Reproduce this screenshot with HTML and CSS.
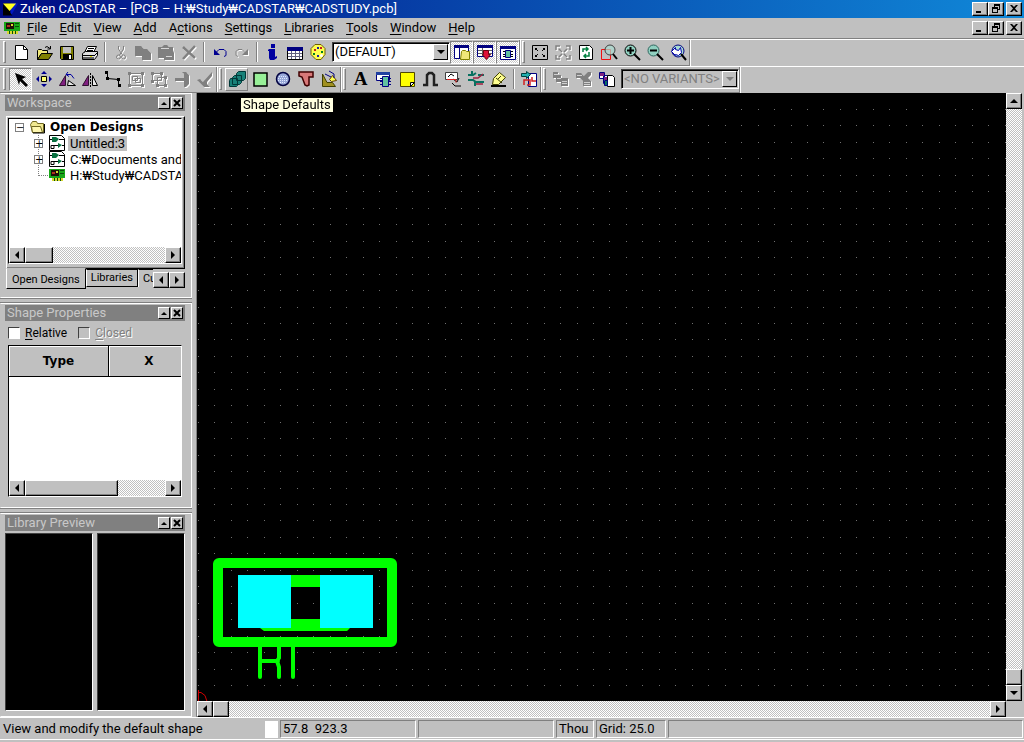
FILE: index.html
```
<!DOCTYPE html>
<html lang="en">
<head>
<meta charset="utf-8">
<title>Zuken CADSTAR</title>
<link rel="stylesheet" href="styles.css">
</head>
<body>
<div class="app">
  <header class="titlebar">
    <svg class="logo" viewBox="0 0 16 16"><path fill="#000" d="M0 2h8v12z"/><path fill="#0018c8" d="M16 2H8v14z"/><path fill="#000" d="M0 3v12h10z"/><path fill="#ffff20" d="M0 2h14L7 10z"/></svg>
    <h1 class="title">Zuken CADSTAR – [PCB – H:₩Study₩CADSTAR₩CADSTUDY.pcb]</h1>
    <div class="winbtns">
      <button class="winbtn" aria-label="Minimize"><svg viewBox="0 0 10 10"><path d="M1 7h5v2H1z"/></svg></button>
      <button class="winbtn" aria-label="Restore"><svg viewBox="0 0 10 10"><path d="M3 0h6v6H7V5h1V2H4v1H3zM1 3h6v6H1zM2 5v3h4V5z" fill-rule="evenodd"/></svg></button>
      <button class="winbtn apart" aria-label="Close"><svg viewBox="0 0 10 10"><path d="M1 1h2l2 2 2-2h2L6 4.500l3 3.500H7L5 6 3 8H1l3-3.500z"/></svg></button>
    </div>
  </header>

  <nav class="menubar">
    <svg class="board" viewBox="0 0 16 12"><path fill="#18a818" d="M0 0h16v9H0z"/><path fill="#201008" d="M2 1h8v6H2z"/><path fill="#b03020" d="M3 3h3v2H3z"/><path fill="#d8d830" d="M3 9h11v3H3zM7 2h2v2H7z"/><path fill="#085008" d="M11 1h4v1h-4zM11 4h4v1h-4zM5 9h1v3H5zM8 9h1v3H8zM11 9h1v3h-1z"/></svg>
    <a href="#"><u>F</u>ile</a><a href="#"><u>E</u>dit</a><a href="#"><u>V</u>iew</a><a href="#"><u>A</u>dd</a><a href="#">A<u>c</u>tions</a><a href="#"><u>S</u>ettings</a><a href="#"><u>L</u>ibraries</a><a href="#"><u>T</u>ools</a><a href="#"><u>W</u>indow</a><a href="#"><u>H</u>elp</a>
    <div class="winbtns">
      <button class="winbtn" aria-label="Minimize document"><svg viewBox="0 0 10 10"><path d="M1 7h5v2H1z"/></svg></button>
      <button class="winbtn" aria-label="Restore document"><svg viewBox="0 0 10 10"><path d="M3 0h6v6H7V5h1V2H4v1H3zM1 3h6v6H1zM2 5v3h4V5z" fill-rule="evenodd"/></svg></button>
      <button class="winbtn apart" aria-label="Close document"><svg viewBox="0 0 10 10"><path d="M1 1h2l2 2 2-2h2L6 4.500l3 3.500H7L5 6 3 8H1l3-3.500z"/></svg></button>
    </div>
  </nav>

  <div class="toolrow">
    <div class="toolbar">
      <i class="grip"></i>
      <button class="tool" aria-label="New"><svg viewBox="0 0 18 18"><path fill="#fff" stroke="#000" d="M3.500 2.500h8l4 4v10h-12z"/><path fill="none" stroke="#000" d="M11.500 2.500v4h4"/></svg></button>
      <button class="tool" aria-label="Open"><svg viewBox="0 0 18 18"><path fill="#f0e878" stroke="#000" d="M2.500 16.500v-9l1-1h3l1 1h5v3h-6z"/><path fill="#808000" stroke="#000" d="M2.500 16.500l4-6h11l-4 6z"/><path fill="none" stroke="#000" d="M10 4.500l2-1 3 2M15.500 3v3h-3"/></svg></button>
      <button class="tool" aria-label="Save"><svg viewBox="0 0 18 18"><path fill="#808000" stroke="#000" d="M2.500 3.500h13v13h-12l-1-1z"/><path fill="#c0c0c0" d="M5 4h8v6H5z"/><path d="M5 11h9v5H5z"/><path fill="#fff" d="M11 12h2v4h-2z"/></svg></button>
      <button class="tool" aria-label="Print"><svg viewBox="0 0 18 18"><path fill="#fff" stroke="#000" d="M6.500 3.500h9l-3 6h-9z"/><path fill="#e0e0e0" stroke="#000" d="M1.500 10.500l3-2h12v4l-3 4h-12z"/><path stroke="#000" d="M2 12.500h12M14 12l2-2M7 5.500h6M6 7.500h6"/><path fill="#606060" d="M2 14h11v2H2z"/><path fill="#e0e000" d="M9 13h2v1H9z"/></svg></button>
      <i class="sep"></i>
      <button class="tool" disabled aria-label="Cut"><svg viewBox="0 0 18 18"><g fill="none" stroke="#808080"><path d="M7.500 3v3l4 6M12.500 3v3l-4 6"/><circle cx="7.500" cy="14" r="2"/><circle cx="12.500" cy="14" r="2"/></g></svg></button>
      <button class="tool" disabled aria-label="Copy"><svg viewBox="0 0 18 18"><path fill="#808080" d="M1 3h6l3 3h3l4 4v7H8v-4H1z"/></svg></button>
      <button class="tool" disabled aria-label="Paste"><svg viewBox="0 0 18 18"><path fill="#808080" d="M1 4h4l2-2h3l2 2h4v3l1 3v7H7v-2H1z"/><path fill="#d8d8d8" d="M4 5h8v1H4zM9 13h6v1H9z"/></svg></button>
      <button class="tool" disabled aria-label="Delete"><svg viewBox="0 0 18 18"><path fill="none" stroke="#808080" stroke-width="2.500" d="M3 4l12 11M15 3L3 16"/></svg></button>
      <i class="sep"></i>
      <button class="tool" aria-label="Undo"><svg viewBox="0 0 18 18"><path fill="none" stroke="#000090" d="M5 10.500l4-4h5l2 2v4l-2 1"/><path fill="#000090" d="M4 6v6h6z"/></svg></button>
      <button class="tool" disabled aria-label="Redo"><svg viewBox="0 0 18 18"><path fill="none" stroke="#808080" d="M13 10.500l-4-4H5l-2 2v4l2 1"/><path fill="#808080" d="M15 6v6H9z"/></svg></button>
      <i class="sep"></i>
      <button class="tool" aria-label="Information"><svg viewBox="0 0 18 18"><path fill="#0000a0" d="M8 1h4v4H8zM6 6h6v8l2-1v2l-3 2H7l-1-2V8H5V7z"/></svg></button>
      <button class="tool" aria-label="Report"><svg viewBox="0 0 18 18"><path fill="#fff" stroke="#000" d="M1.500 4.500h15v12h-15z"/><path fill="#000080" d="M1 4h16v4H1z"/><path stroke="#606080" d="M2 10.500h14M2 13.500h14M5.500 8v8M9.500 8v8M13.500 8v8"/></svg></button>
      <button class="tool" aria-label="Colours"><svg viewBox="0 0 18 18"><path fill="#ffff50" stroke="#706000" d="M6 1.500h6l4 4v6l-4 5H7l-5-5v-6z"/><path fill="#c02020" d="M5 6h2v2H5zM11 4h2v2h-2z"/><path fill="#008020" d="M4 10h2v2H4zM12 8h2v2h-2z"/><path fill="#2020a0" d="M8 4h2v2H8zM8 12h2v2H8z"/><circle cx="12.500" cy="12.500" r="1.500" fill="#fff"/></svg></button>
      <span class="combo"><select aria-label="Colour file"><option>(DEFAULT)</option></select><i class="drop"></i></span>
      <button class="tool pressed" aria-label="Workspace window"><svg viewBox="0 0 18 18"><path fill="#fff" stroke="#000080" d="M1.500 2.500h14v13h-14z"/><path fill="#000080" d="M1 2h15v3H1zM6 5h1v11H6z"/><path fill="#f0e878" stroke="#808000" d="M8.500 8.500l1-1h3l1 1h3v8h-9z"/></svg></button>
      <button class="tool pressed" aria-label="Item properties"><svg viewBox="0 0 18 18"><path fill="#fff" stroke="#000080" d="M1.500 2.500h15v11h-15z"/><path fill="#000080" d="M1 2h16v3H1z"/><path stroke="#606060" d="M2 7.500h14M2 10.500h14M6.500 5v8"/><path fill="#e01038" stroke="#700010" d="M7.500 7.500h5v4h2l-4 5-4-5h1z"/></svg></button>
      <button class="tool pressed" aria-label="Library preview"><svg viewBox="0 0 18 18"><path fill="#fff" stroke="#000080" d="M1.500 3.500h15v13h-15z"/><path fill="#000080" d="M1 3h16v3H1z"/><path fill="#60c0a0" stroke="#000080" d="M6.500 7.500h5v7h-5z"/><path stroke="#000" d="M4 8.500h2M4 11.500h2M4 13.500h2M12 8.500h2M12 11.500h2M12 13.500h2"/></svg></button>
    </div>
    <div class="toolbar">
      <i class="grip"></i>
      <button class="tool" aria-label="View all"><svg viewBox="0 0 18 18"><path fill="none" stroke="#000" d="M1.500 2.500h15v14h-15zM4.500 7V5.500H6M4 5l3 3M13.500 7V5.500H12M14 5l-3 3M4.500 12v1.500H6M4 14l3-3M13.500 12v1.500H12M14 14l-3-3"/></svg></button>
      <button class="tool" disabled aria-label="View selected"><svg viewBox="0 0 18 18"><path fill="none" stroke="#808080" stroke-width="1.500" d="M2 7V3h4M16 7V3h-4M2 12v4h4M16 12v4h-4M5 6l3 3M13 6l-3 3M5 14l3-3M13 14l-3-3"/></svg></button>
      <button class="tool" aria-label="Redraw"><svg viewBox="0 0 18 18"><path fill="#fff" stroke="#000" d="M2.500 2.500h10l3 3v11h-13z"/><path fill="none" stroke="#008040" stroke-width="1.500" d="M6 9V6h5M9 4l2 2-2 2M12 9v4H7M9 11l-2 2 2 2"/></svg></button>
      <button class="tool" aria-label="Zoom area"><svg viewBox="0 0 18 18"><path fill="none" stroke="#f01010" d="M1.500 6.500h9v10h-9z"/><circle cx="10" cy="7" r="5" fill="#a8dcd0" fill-opacity=".7" stroke="#404040"/><path stroke="#000" stroke-width="2" d="M13 11l4 5"/></svg></button>
      <button class="tool" aria-label="Zoom in"><svg viewBox="0 0 18 18"><circle cx="7.500" cy="7.500" r="5.500" fill="#90d0c0" stroke="#000"/><path stroke="#000" stroke-width="2" d="M4 7.500h7M7.500 4v7M11 11l6 6"/></svg></button>
      <button class="tool" aria-label="Zoom out"><svg viewBox="0 0 18 18"><circle cx="7.500" cy="7.500" r="5.500" fill="#90d0c0" stroke="#306860"/><path stroke="#000" stroke-width="2" d="M4 7.500h7M11 11l6 6"/></svg></button>
      <button class="tool" aria-label="Previous view"><svg viewBox="0 0 18 18"><circle cx="9" cy="8" r="6" fill="#a8dcd0" stroke="#000080"/><path fill="#fff" stroke="#0000b0" d="M2.500 8.500l4-4v2l3 1 2-3 1 5-3 3-3-1v1z"/><path stroke="#000" stroke-width="2" d="M12 11l5 6"/></svg></button>
    </div>
  </div>

  <div class="toolrow">
    <div class="toolbar">
      <i class="grip"></i>
      <button class="tool pressed" aria-label="Select"><svg viewBox="0 0 18 18"><path d="M3 3l11 4-4 2 6 6-2 2-6-6-1 4z"/></svg></button>
      <button class="tool" aria-label="Move"><svg viewBox="0 0 18 18"><path fill="#ffff70" stroke="#000" d="M6.500 6.500h5v5h-5z"/><path fill="#000090" d="M9 1l3 3H6zM9 17l3-3H6zM1 9l3-3v6zM17 9l-3-3v6z"/></svg></button>
      <button class="tool" aria-label="Rotate"><svg viewBox="0 0 18 18"><path fill="#802080" stroke="#301030" d="M1.500 15.500l6-10v10z"/><path fill="#e8e8e8" stroke="#000" d="M9.500 15.500h8l-7-5z"/><path fill="none" stroke="#0000a0" d="M8 4.500h5l3 4M10 2L8 4.500l3 2"/></svg></button>
      <button class="tool" aria-label="Mirror"><svg viewBox="0 0 18 18"><path fill="#802080" stroke="#301030" d="M1.500 15.500l6-10v10z"/><path fill="#e8e8e8" stroke="#000" d="M16.500 15.500l-5-10v10z"/><path stroke="#000" stroke-dasharray="2 1" d="M9.500 3v14"/></svg></button>
      <button class="tool" aria-label="Edit segment"><svg viewBox="0 0 18 18"><path fill="none" stroke="#000" d="M2 2.500h1.500v6l11 1V15"/><path d="M1 1h3v3H1zM2 7h3v3H2zM13 8h3v3h-3zM14 14h3v3h-3z"/></svg></button>
      <button class="tool" disabled aria-label="Group"><svg viewBox="0 0 18 18"><path fill="none" stroke="#808080" d="M2.500 3.500h13v12h-13zM5.500 6.500h5v4h-5zM8.500 8.500h5v4h-5z"/><path fill="#808080" d="M1 2h3v3H1zM14 2h3v3h-3zM1 14h3v3H1zM14 14h3v3h-3z"/></svg></button>
      <button class="tool" disabled aria-label="Ungroup"><svg viewBox="0 0 18 18"><path fill="none" stroke="#808080" d="M2.500 3.500h9v7h-9zM7.500 7.500h8v8h-8z"/><path fill="#808080" d="M1 2h3v3H1zM10 2h3v3h-3zM1 10h3v3H1zM14 6h3v3h-3zM6 14h3v3H6zM14 14h3v3h-3z"/></svg></button>
      <button class="tool" disabled aria-label="Finish"><svg viewBox="0 0 18 18"><path fill="#808080" d="M2 8h9V4l-2-2h4l3 3v9l-3 3h-2v-6H2z"/></svg></button>
      <button class="tool" disabled aria-label="Verify"><svg viewBox="0 0 18 18"><path fill="#808080" d="M1 10l3-1 3 3L16 2v4l-5 6v2l3 3H8z"/></svg></button>
    </div>
    <div class="toolbar">
      <i class="grip"></i>
      <button class="tool raised" aria-label="Shape Defaults"><svg viewBox="0 0 18 18"><path fill="#188078" stroke="#003838" d="M8.500 3.500l2-2h7v7l-2 2h-7zM4.500 7.500l2-2h7v7l-2 2h-7zM1.500 10.500l1-2h7v7l-1 1h-7z"/></svg></button>
      <button class="tool" aria-label="Rectangle"><svg viewBox="0 0 18 18"><path fill="#98f098" stroke="#000" stroke-width="1.500" d="M3 3h13v13H3z"/></svg></button>
      <button class="tool" aria-label="Circle"><svg viewBox="0 0 18 18"><circle cx="9" cy="9" r="6.500" fill="#98a8d8" stroke="#000040" stroke-width="1.500"/><path stroke="#e0e8ff" stroke-dasharray="1 1" d="M5 6.500h8M4 8.500h10M4 10.500h10M6 12.500h6"/></svg></button>
      <button class="tool" aria-label="Polygon"><svg viewBox="0 0 18 18"><path fill="#d87878" stroke="#400000" stroke-width="1.500" d="M2 2h14v5h-4v8l-2 1-2-1L5 7 2 6z"/></svg></button>
      <button class="tool" aria-label="Edit shape"><svg viewBox="0 0 18 18"><path fill="#a09020" stroke="#404000" d="M2.500 4v12.500h13l-3-4H7z"/><path fill="#ffff50" stroke="#604000" d="M9.500 9.500l3-4 4 5-5 1z"/><path fill="none" stroke="#000080" d="M5 4l6 3M9 1l5 3v4"/></svg></button>
    </div>
    <div class="toolbar">
      <i class="grip"></i>
      <button class="tool" aria-label="Text"><b class="letter">A</b></button>
      <button class="tool" aria-label="Component"><svg viewBox="0 0 18 18"><path fill="#fff" stroke="#000080" d="M1.500 2.500h13v8h-13z"/><path fill="#2040a0" d="M1 2h14v3H1z"/><path fill="#60c0a0" stroke="#000080" d="M7.500 6.500h6v10h-6z"/><path stroke="#000080" d="M5 8.500h2M5 11.500h2M5 14.500h2M14 8.500h2M14 11.500h2M14 14.500h2"/></svg></button>
      <button class="tool" aria-label="Note"><svg viewBox="0 0 18 18"><path fill="#ffff00" stroke="#504800" d="M2.500 2.500h14v14h-14z"/><path fill="#fff" stroke="#000" d="M12.500 16.500v-4h4z"/></svg></button>
      <button class="tool" aria-label="Jumper"><svg viewBox="0 0 18 18"><path fill="none" stroke="#202020" stroke-width="2.500" d="M2 15h4V5l2-2h3l2 2v10h4"/></svg></button>
      <button class="tool" aria-label="Testpoint"><svg viewBox="0 0 18 18"><path fill="#fff" stroke="#404040" d="M1.500 2.500h12v7h-12z"/><path fill="none" stroke="#000" d="M4 7l3-3 3 2M9 9l4 3 2-4M8 13l3 3h6"/><path fill="none" stroke="#e02020" d="M3 9.500h9v3"/></svg></button>
      <button class="tool" aria-label="Route"><svg viewBox="0 0 18 18"><g fill="none" stroke="#087060" stroke-width="2"><path d="M1 5h5l3-2M1 10h5l3 2h8M5 1v5M8 16v-4M11 5h6"/></g><path fill="none" stroke="#a02040" stroke-width="1.500" d="M6 8h5l5-4M9 14h7"/></svg></button>
      <button class="tool" aria-label="Template"><svg viewBox="0 0 18 18"><path stroke="#000" stroke-width="2" d="M1 16h15"/><path fill="#ffff90" stroke="#404000" d="M2.500 14.500l1-6 6-6 6 5-7 7z"/><path fill="none" stroke="#404000" d="M6 8l6 5M8 9l3-3"/></svg></button>
      <i class="sep"></i>
      <button class="tool" aria-label="Design transfer"><svg viewBox="0 0 18 18"><path fill="#fff" stroke="#000080" d="M8.500 3.500h8v13h-8z"/><path fill="#20b0b0" stroke="#004040" d="M1.500 3.500h5v-2l4 3-4 4v-2h-5z"/><path fill="none" stroke="#d02020" stroke-width="1.500" d="M4 15v-5h6v5H7M12 7v4h4"/></svg></button>
    </div>
    <div class="toolbar">
      <i class="grip"></i>
      <button class="tool" disabled aria-label="Variant add"><svg viewBox="0 0 18 18"><path fill="#808080" d="M1 2h5v3h3v7H4V8H1zM9 8h7v8H9z"/><path stroke="#d0d0d0" d="M2 4.500h5M5 8.500h4M10 11.500h5M10 13.500h5"/></svg></button>
      <button class="tool" disabled aria-label="Variant check"><svg viewBox="0 0 18 18"><path fill="#808080" d="M1 3h5l3 3 4-4h3v3l-3 3 3 3v5H8v-5L5 8H1z"/><path stroke="#d0d0d0" d="M2 5.500h5M9 12.500h6M9 14.500h6"/></svg></button>
      <button class="tool" aria-label="Variant list"><svg viewBox="0 0 18 18"><path fill="#fff" stroke="#000080" d="M1.500 2.500h5v6h-5zM5.500 5.500h5v8h-5z"/><path fill="#802080" d="M2 3h4v3H2zM6 7h3v3H6z"/><path fill="#fff" stroke="#000" d="M9.500 5.500h5l2 2v9h-7z"/><path fill="#087060" stroke="#000080" d="M6.500 10.500h3v5h-3z"/></svg></button>
      <span class="combo"><select disabled aria-label="Variant"><option>&lt;NO VARIANTS&gt;</option></select><i class="drop"></i></span>
    </div>
  </div>

  <main class="main">
    <aside class="dock">
      <section class="pane workspace">
        <div class="caption"><h2>Workspace</h2><button class="capbtn" aria-label="Collapse workspace"><i class="arrow up"></i></button><button class="capbtn" aria-label="Close workspace"><svg viewBox="0 0 8 8"><path stroke="#000" stroke-width="2" d="M1 1l6 6M7 1L1 7"/></svg></button></div>
        <div class="tabpage">
          <div class="treebox">
            <ul class="tree">
              <li class="root"><button class="twist" aria-label="Collapse">−</button><svg class="nodeicon" viewBox="0 0 16 14"><path fill="#f0e890" stroke="#706820" d="M2.500 12.500L.500 4.500l2-3h4l1 2h6v9z"/><path fill="#fff8b0" stroke="#706820" d="M2.500 12.500l-1-6h9l2 6z"/><path fill="none" stroke="#000" d="M14.500 4v9H3"/></svg><b>Open Designs</b></li>
              <li class="child"><button class="twist" aria-label="Expand">+</button><svg class="nodeicon" viewBox="0 0 16 16"><path fill="#fff" stroke="#000" d="M.500.500h12l3 3v12H.500z"/><path fill="#087040" d="M3 2h4l3 2-3 3H3zM9 8l4 2-4 3z"/><path fill="none" stroke="#000" d="M0 4.500h3M10 4.500h5M5 10.500h4M13 10.500h3M2 10.500h3v3H2z"/></svg><span class="chosen">Untitled:3</span></li>
              <li class="child"><button class="twist" aria-label="Expand">+</button><svg class="nodeicon" viewBox="0 0 16 16"><path fill="#fff" stroke="#000" d="M.500.500h12l3 3v12H.500z"/><path fill="#087040" d="M3 2h4l3 2-3 3H3zM9 8l4 2-4 3z"/><path fill="none" stroke="#000" d="M0 4.500h3M10 4.500h5M5 10.500h4M13 10.500h3M2 10.500h3v3H2z"/></svg><span>C:₩Documents and Settings</span></li>
              <li class="child last"><i class="branch"></i><svg class="nodeicon" viewBox="0 0 16 12"><path fill="#18a818" d="M0 0h16v9H0z"/><path fill="#201008" d="M2 1h8v6H2z"/><path fill="#b03020" d="M3 3h3v2H3z"/><path fill="#d8d830" d="M3 9h11v3H3zM7 2h2v2H7z"/><path fill="#085008" d="M11 1h4v1h-4zM11 4h4v1h-4zM5 9h1v3H5zM8 9h1v3H8zM11 9h1v3h-1z"/></svg><span>H:₩Study₩CADSTAR</span></li>
            </ul>
            <div class="scroll"><button class="sb" aria-label="Scroll left"><i class="arrow left"></i></button><i class="thumb tree-thumb"></i><i class="track"></i><button class="sb" aria-label="Scroll right"><i class="arrow right"></i></button></div>
          </div>
        </div>
        <div class="tabs">
          <button class="tab current">Open Designs</button><button class="tab">Libraries</button><button class="tab clipped">Cu</button>
          <button class="sb" aria-label="Previous tab"><i class="arrow left"></i></button><button class="sb" aria-label="Next tab"><i class="arrow right"></i></button>
        </div>
      </section>

      <section class="pane shape">
        <div class="caption"><h2>Shape Properties</h2><button class="capbtn" aria-label="Collapse shape properties"><i class="arrow up"></i></button><button class="capbtn" aria-label="Close shape properties"><svg viewBox="0 0 8 8"><path stroke="#000" stroke-width="2" d="M1 1l6 6M7 1L1 7"/></svg></button></div>
        <div class="checks"><label><input type="checkbox"><span><u>R</u>elative</span></label><label class="off"><input type="checkbox" disabled><span><u>C</u>losed</span></label></div>
        <div class="gridbox">
          <table class="coords"><thead><tr><th class="type">Type</th><th>X</th></tr></thead></table>
          <div class="scroll"><button class="sb" aria-label="Scroll left"><i class="arrow left"></i></button><i class="thumb shape-thumb"></i><i class="track"></i><button class="sb" aria-label="Scroll right"><i class="arrow right"></i></button></div>
        </div>
      </section>

      <section class="pane preview">
        <div class="caption"><h2>Library Preview</h2><button class="capbtn" aria-label="Collapse library preview"><i class="arrow up"></i></button><button class="capbtn" aria-label="Close library preview"><svg viewBox="0 0 8 8"><path stroke="#000" stroke-width="2" d="M1 1l6 6M7 1L1 7"/></svg></button></div>
        <div class="views"><div class="view"></div><div class="view"></div></div>
      </section>
    </aside>

    <div class="design">
      <div class="sheet">
        <canvas class="dots" id="dots"></canvas>
        <svg class="part" viewBox="0 0 220 150">
          <rect x="21" y="12" width="174" height="79" rx="1" fill="none" stroke="#0f0" stroke-width="10" stroke-linejoin="round"/>
          <path fill="#0f0" d="M94 24h29v12H94zM94 68h29v9H94zM63 77h90l-3 3H67z"/>
          <path fill="#0ff" d="M41 24h53v53H41zM123 24h53v53h-53z"/>
          <path fill="none" stroke="#0f0" stroke-width="4" stroke-linecap="round" d="M63 94v32M82 94v13l-2 3 2 6v10M63 110h18M96 94v32"/>
          <path fill="none" stroke="#d00000" d="M1.500 150v-11M1 141.500h3l4 3 2 6"/>
        </svg>
        <div class="tooltip" role="tooltip">Shape Defaults</div>
      </div>
      <div class="scroll vertical"><button class="sb" aria-label="Scroll up"><i class="arrow up"></i></button><i class="track"></i><i class="thumb sheet-thumb"></i><button class="sb" aria-label="Scroll down"><i class="arrow down"></i></button></div>
      <div class="scroll"><button class="sb" aria-label="Scroll left"><i class="arrow left"></i></button><i class="thumb sheet-thumb"></i><i class="track"></i><button class="sb" aria-label="Scroll right"><i class="arrow right"></i></button></div>
    </div>
  </main>

  <footer class="status">
    <span class="hint">View and modify the default shape</span><i class="swatch"></i>
    <span class="cell wide">57.8&nbsp; 923.3</span><span class="cell wide"></span><span class="cell unit">Thou</span><span class="cell step">Grid: 25.0</span><span class="cell rest"></span>
  </footer>
</div>
<script src="grid.js"></script>
</body>
</html>
```
FILE: grid.js
```
// Placement grid of the design sheet: one dot every STEP pixels.
const STEP = 16.46;
const dots = document.getElementById('dots');

function drawGrid() {
  dots.width = dots.clientWidth;
  dots.height = dots.clientHeight;
  const ctx = dots.getContext('2d');
  ctx.fillStyle = '#707070';
  for (let y = 16; y < dots.height; y += STEP) {
    for (let x = 1; x < dots.width; x += STEP) {
      ctx.fillRect(Math.round(x), Math.round(y), 1, 1);
    }
  }
}

window.addEventListener('resize', drawGrid);
drawGrid();
```
FILE: styles.css
```
* { box-sizing: border-box; }
body { margin: 0; }
button, select, input { font: inherit; color: inherit; margin: 0; padding: 0; border-radius: 0; }
h1, h2 { margin: 0; font: inherit; }
u { text-underline-offset: 2px; }

.app {
  display: flex;
  flex-direction: column;
  height: 100vh;
  overflow: hidden;
  background: #c0c0c0;
  color: #000;
  font: 13px/16px Roboto, "Noto Sans CJK KR", sans-serif;
  white-space: nowrap;
}

/* title and menu */
.titlebar {
  display: flex;
  align-items: center;
  height: 18px;
  padding: 0 2px 0 3px;
  gap: 2px;
  background: linear-gradient(90deg, #000c84, #1088d8);
  color: #fff;
}
.logo { width: 15px; height: 16px; }
.title { flex: 1; }
.winbtns { display: flex; margin-left: auto; }
.winbtn {
  display: grid;
  place-items: center;
  width: 16px;
  height: 14px;
  background: #c0c0c0;
  border: 1px solid;
  border-color: #fff #000 #000 #fff;
  box-shadow: inset -1px -1px #808080;
}
.winbtn svg { width: 10px; height: 10px; }
.apart { margin-left: 2px; }
.menubar {
  display: flex;
  align-items: center;
  height: 21px;
  padding: 0 2px 0 4px;
  gap: 12px;
  border-bottom: 1px solid #808080;
}
.menubar a { color: inherit; text-decoration: none; }
.board { width: 16px; height: 12px; margin-right: -5px; }

/* toolbars */
.toolrow { display: flex; height: 27px; border-top: 1px solid #fff; }
.toolbar {
  display: flex;
  align-items: center;
  padding: 0 0 1px 3px;
  border-right: 1px solid #808080;
  border-bottom: 1px solid #808080;
  box-shadow: 1px 0 #fff;
}
.toolbar + .toolbar { padding-left: 2px; }
.grip {
  width: 3px;
  height: 22px;
  margin-right: 3px;
  border: 1px solid;
  border-color: #fff #808080 #808080 #fff;
}
.sep {
  width: 2px;
  height: 20px;
  margin: 0 2px 0 3px;
  border-left: 1px solid #808080;
  border-right: 1px solid #fff;
}
.tool {
  display: grid;
  place-items: center;
  width: 23px;
  height: 23px;
  background: none;
  border: 1px solid transparent;
}
.tool svg { width: 18px; height: 18px; }
.tool:disabled svg { filter: drop-shadow(1px 1px 0 #fff); }
.pressed {
  background: repeating-conic-gradient(#fff 0 25%, #c8c8c8 0 50%) 0 0 / 2px 2px;
  border-color: #808080 #fff #fff #808080;
}
.raised { border-color: #fff #808080 #808080 #fff; }
.letter { font: bold 19px/20px "Liberation Serif", serif; }
.combo { display: grid; width: 118px; height: 20px; margin-left: 3px; }
.combo select {
  grid-area: 1 / 1;
  appearance: none;
  width: 100%;
  padding: 0 2px;
  background: #fff;
  border: 1px solid;
  border-color: #404040 #fff #fff #404040;
  box-shadow: inset 1px 1px #000;
}
.combo select:disabled { background: #c0c0c0; color: #808080; opacity: 1; }
.drop {
  grid-area: 1 / 1;
  place-self: center end;
  display: grid;
  place-items: center;
  width: 15px;
  height: 16px;
  margin-right: 2px;
  background: #c0c0c0;
  border: 1px solid;
  border-color: #fff #000 #000 #fff;
  pointer-events: none;
}
.drop::after, .down::after {
  content: "";
  border: 4px solid transparent;
  border-width: 4px 4px 0;
  border-top-color: #000;
}
select:disabled + .drop::after { border-top-color: #808080; }

/* arrows and scroll bars */
.arrow { display: grid; place-items: center; }
.up::after, .left::after, .right::after { content: ""; border: 4px solid transparent; }
.up::after { border-width: 0 4px 4px; border-bottom-color: #000; }
.left::after { border-width: 4px 4px 4px 0; border-right-color: #000; }
.right::after { border-width: 4px 0 4px 4px; border-left-color: #000; }
.scroll { display: flex; height: 16px; }
.sb, .thumb {
  display: grid;
  place-items: center;
  flex: none;
  width: 16px;
  height: 16px;
  background: #c0c0c0;
  border: 1px solid;
  border-color: #fff #000 #000 #fff;
  box-shadow: inset -1px -1px #808080;
}
.track { flex: 1; background: repeating-conic-gradient(#fff 0 25%, #c0c0c0 0 50%) 0 0 / 2px 2px; }
.tree-thumb { width: 28px; }
.shape-thumb { width: 93px; }
.vertical { flex-direction: column; width: 16px; height: auto; }

/* docked panes */
.main { display: flex; flex: 1; min-height: 0; }
.dock {
  display: flex;
  flex-direction: column;
  flex: none;
  gap: 5px;
  width: 197px;
  padding-right: 4px;
  border-right: 1px solid #808080;
}
.pane {
  display: flex;
  flex-direction: column;
  padding: 1px 6px 0 4px;
  border: 1px solid;
  border-color: #fff #fff #fff transparent;
  box-shadow: 0 1px #808080, 0 -1px #808080;
}
.workspace, .shape { height: 205px; }
.preview { flex: 1; padding-bottom: 5px; }
.caption {
  display: flex;
  align-items: center;
  flex: none;
  gap: 1px;
  height: 16px;
  padding: 0 2px;
  background: #808080;
  color: #c8c8c8;
}
.caption h2 { flex: 1; }
.capbtn {
  display: grid;
  place-items: center;
  width: 12px;
  height: 12px;
  background: #c0c0c0;
  border: 1px solid;
  border-color: #fff #000 #000 #fff;
}
.capbtn svg { width: 8px; height: 8px; }
.capbtn .up::after { border-width: 0 3px 3px; }
.tabpage {
  height: 153px;
  margin: 5px 0 0 1px;
  padding: 1px 2px 4px 1px;
  border: 1px solid;
  border-color: #fff #000 #000 #fff;
  box-shadow: inset -1px -1px #808080;
}
.treebox {
  display: flex;
  flex-direction: column;
  height: 100%;
  border: 1px solid;
  border-color: #000 #fff #fff #000;
  background: #fff;
  overflow: hidden;
}
.tree { flex: 1; margin: 0; padding: 0 0 0 6px; list-style: none; }
.tree li { display: flex; align-items: center; height: 16px; }
.tree b { margin-left: 4px; font: bold 12px/16px "DejaVu Sans", sans-serif; }
.tree span { margin-left: 3px; padding: 0 2px; line-height: 15px; }
.tree .chosen { background: #c0c0c0; }
.nodeicon { flex: none; width: 16px; height: 16px; }
.twist {
  display: grid;
  place-items: center;
  flex: none;
  width: 9px;
  height: 9px;
  margin: 0 6px 0 -4px;
  background: #fff;
  border: 1px solid #808080;
  font: 10px/7px "DejaVu Sans", sans-serif;
}
.root .twist { margin-left: 0; }
.child {
  margin-left: 23px;
  background: repeating-linear-gradient(#808080 0 1px, #fff 1px 2px) 0 0 / 1px 100% no-repeat;
}
.last { background-size: 1px 8px; }
.branch { flex: none; width: 10px; margin-right: 1px; border-top: 1px dotted #808080; }
.tabs { display: flex; height: 22px; padding-left: 1px; }
.tab {
  height: 18px;
  padding: 0 4px;
  background: #c0c0c0;
  border: 1px solid;
  border-color: #000 #000 #000 #fff;
  font-size: 11px;
}
.current { height: 21px; padding: 2px 5px 0; border-top-color: #c0c0c0; margin-top: -1px; }
.clipped { flex: 1; min-width: 0; overflow: hidden; text-align: left; border-right: 0; border-bottom: 0; }
.tabs .sb { margin-top: 3px; }

.checks { display: flex; gap: 11px; padding: 5px 0 5px 3px; font-size: 12px; }
.checks label { display: flex; align-items: center; gap: 5px; height: 14px; }
.checks input {
  appearance: none;
  width: 12px;
  height: 12px;
  background: #fff;
  border: 1px solid;
  border-color: #404040 #fff #fff #404040;
}
.off { color: #808080; text-shadow: 1px 1px #fff; }
.checks .off input { background: #c0c0c0; }
.gridbox {
  display: flex;
  flex-direction: column;
  flex: 1;
  margin: 0 3px 10px;
  border: 1px solid;
  border-color: #000 #fff #fff #000;
  background: #fff;
}
.coords { width: 100%; border-collapse: separate; border-spacing: 0; table-layout: fixed; margin-bottom: auto; }
.coords th {
  height: 31px;
  padding: 0;
  background: #c0c0c0;
  border: solid #000;
  border-width: 0 0 1px;
  box-shadow: inset 1px 1px #fff;
  font: bold 12px/16px "DejaVu Sans", sans-serif;
}
.coords .type { width: 100px; border-right-width: 1px; }
.coords th + th { padding-left: 8px; }
.views { display: flex; flex: 1; gap: 4px; margin-top: 2px; }
.view { flex: 1; background: #000; border: 1px solid; border-color: #404040 #fff #fff #404040; }

/* design sheet */
.design {
  display: grid;
  grid-template: 1fr 16px / 1fr 17px;
  flex: 1;
  min-width: 0;
  padding-right: 1px;
}
.sheet { position: relative; overflow: hidden; background: #000; }
.dots { position: absolute; inset: 0; width: 100%; height: 100%; }
.part { position: absolute; left: 0; bottom: 0; width: 220px; height: 150px; }
.tooltip {
  position: absolute;
  left: 44px;
  top: 5px;
  padding: 0 2px;
  background: #ffffe1;
  line-height: 14px;
}

/* status bar */
.status {
  display: flex;
  align-items: center;
  gap: 2px;
  height: 25px;
  padding: 0 1px 2px 3px;
  border-top: 1px solid #fff;
  box-shadow: inset 0 -2px #c0c0c0, inset 0 -3px #fff;
}
.hint { width: 260px; }
.swatch { width: 13px; height: 17px; background: #fff; }
.cell {
  height: 18px;
  padding: 0 2px;
  border: 1px solid;
  border-color: #808080 #fff #fff #808080;
}
.wide { width: 136px; }
.unit { width: 38px; }
.step { width: 70px; }
.rest { flex: 1; }
```
